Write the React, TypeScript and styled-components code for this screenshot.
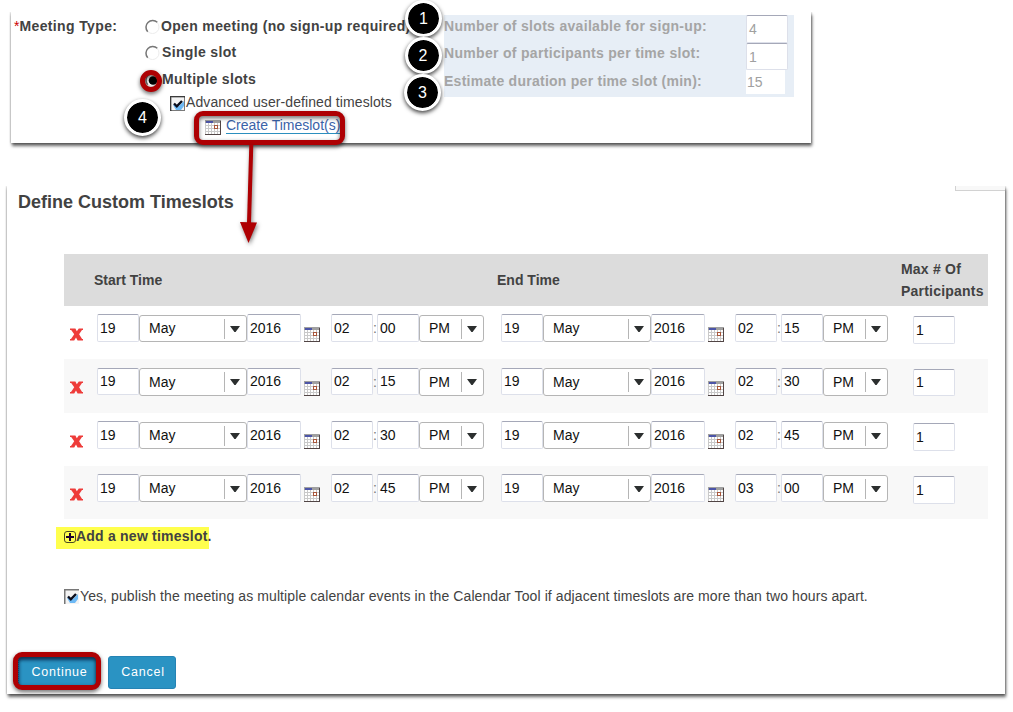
import React from 'react';
import styled, { createGlobalStyle } from 'styled-components';

const RED = '#ae0003';

const GlobalStyle = createGlobalStyle`
  * { box-sizing: border-box; }
  body {
    margin: 0;
    background: #fff;
    color: #424242;
    font: 14px/20px "Liberation Sans", Arial, sans-serif;
  }
  svg { display: block; flex: none; }
`;

const Page = styled.main`
  position: relative;
  width: 1013px;
  height: 712px;
  overflow: hidden;
  padding: 12px 0 0 7px;
`;

const Panel = styled.section`
  background: #fff;
  box-shadow: 0 0 2px rgba(0, 0, 0, 0.4), 1px 3px 3px rgba(0, 0, 0, 0.6);
  clip-path: inset(0 -8px -10px -8px);
`;

const TypePanel = styled(Panel)`
  display: flex;
  width: 800px;
  height: 131px;
  margin-left: 4px;
  padding: 1px 0 0 3px;
`;

const SlotsPanel = styled(Panel)`
  width: 998px;
  height: 508px;
  margin-top: 43px;
`;

const FieldName = styled.div`
  width: 131px;
  line-height: 26px;
  font-weight: bold;
  letter-spacing: 0.37px;
  white-space: nowrap;
`;

const Required = styled.span`
  color: #c00;
  font-weight: normal;
  letter-spacing: 0;
`;

const Options = styled.div`
  width: 299px;
`;

const Option = styled.label<{ $height: number; $sub?: boolean; $gap?: number }>`
  display: flex;
  align-items: center;
  gap: ${(p) => p.$gap ?? 2}px;
  height: ${(p) => p.$height}px;
  padding-left: ${(p) => (p.$sub ? 25 : 0)}px;
  font-weight: ${(p) => (p.$sub ? 'normal' : 'bold')};
  line-height: ${(p) => (p.$sub ? 19 : 20)}px;
  letter-spacing: ${(p) => (p.$sub ? 0.09 : 0.34)}px;
  white-space: nowrap;
`;

const OptionText = styled.span`
  padding-bottom: 2px;
`;

const CreateLine = styled.div`
  display: flex;
  align-items: center;
  gap: 5px;
  height: 22px;
  padding: 2px 0 0 60px;
  white-space: nowrap;
`;

const Link = styled.a`
  margin-bottom: 2px;
  color: #3a62a8;
  line-height: 15px;
  border-bottom: 1px solid #2b8fbf;
`;

const SlotSettings = styled.div`
  width: 350px;
  height: 82px;
  margin-top: 2px;
  background: #e7eef6;
`;

const Setting = styled.div<{ $height: number; $line: number }>`
  display: flex;
  justify-content: space-between;
  height: ${(p) => p.$height}px;
  line-height: ${(p) => p.$line}px;
  padding-right: 6px;
  color: #a5a5a5;
  font-weight: bold;
  letter-spacing: ${(p) => (p.$line === 23 && p.$height === 27 ? 0.26 : 0.31)}px;
`;

const TextBox = styled.span<{ $w?: number; $muted?: boolean }>`
  flex: none;
  width: ${(p) => p.$w ?? 42}px;
  height: 28px;
  max-height: 100%;
  padding-left: ${(p) => (p.$muted ? 2 : 2)}px;
  border: 1px solid #dde0ea;
  border-top-color: #a5a8b8;
  border-radius: 2px;
  background: #fff;
  color: ${(p) => (p.$muted ? '#a0a0a0' : '#111')};
  font-weight: normal;
  letter-spacing: 0;
  line-height: ${(p) => (p.$muted ? 26 : 26)}px;
`;

const PlainBox = styled.span`
  width: 39px;
  height: 24px;
  margin-right: 3px;
  padding-left: 1px;
  background: #fff;
  color: #a0a0a0;
  font-weight: normal;
  letter-spacing: 0;
  line-height: 25px;
`;

const Title = styled.h1`
  margin: -1px 0 0;
  padding-left: 11px;
  font-size: 18px;
  line-height: 24px;
`;

const Table = styled.div`
  width: 924px;
  margin: 40px 0 0 57px;
`;

const TableHead = styled.div`
  display: grid;
  grid-template-columns: 403px 404px 1fr;
  align-items: center;
  height: 52px;
  padding-left: 30px;
  background: #dcdcdc;
  font-weight: bold;
  line-height: 22px;
`;

const LooseText = styled.span`
  letter-spacing: 0.21px;
`;

const Select = styled.span<{ $w: number }>`
  display: flex;
  align-items: center;
  flex: none;
  width: ${(p) => p.$w}px;
  height: 27px;
  margin-top: 1px;
  padding-left: 9px;
  border: 1px solid #b5b5b5;
  border-radius: 3px;
  background: #fff;
  color: #111;
  line-height: 24px;
`;

const Row = styled.div<{ $shaded: boolean; $tall: boolean }>`
  display: flex;
  align-items: flex-start;
  height: ${(p) => (p.$tall ? 54 : 53)}px;
  padding: ${(p) => (p.$tall ? 9 : 8)}px 0 0 6px;
  background: ${(p) => (p.$shaded ? '#f8f8f8' : '#fff')};

  ${TextBox} {
    height: ${(p) => (p.$tall ? 27 : 28)}px;
    line-height: ${(p) => (p.$tall ? 24 : 26)}px;
  }

  ${Select} {
    height: ${(p) => (p.$tall ? 28 : 27)}px;
    margin-top: ${(p) => (p.$tall ? 0 : 1)}px;
  }
`;

const RemoveButton = styled.span<{ $tall: boolean }>`
  width: 27px;
  padding-top: ${(p) => (p.$tall ? 13 : 14)}px;
`;

const DateTime = styled.div`
  display: flex;
  align-items: flex-start;
  width: 404px;
`;

const SelectValue = styled.span`
  flex: 1;
  height: 25px;
`;

const SelectArrow = styled.span`
  display: flex;
  align-items: center;
  justify-content: center;
  width: 22px;
  height: 20px;
  padding-right: 2px;
  border-left: 1px solid #b5b5b5;
`;

const CalendarSlot = styled.span`
  padding: 13px 11px 0 3px;
`;

const Colon = styled.span`
  width: 4px;
  line-height: 28px;
  color: #777;
`;

const Capacity = styled.div<{ $tall: boolean }>`
  display: flex;
  padding: ${(p) => (p.$tall ? 1 : 2)}px 0 0 8px;
`;

const AddSlot = styled.div`
  display: flex;
  align-items: center;
  width: 153px;
  height: 22px;
  margin: 8px 0 0 49px;
  padding: 0 0 2px 8px;
  background: #ffff4d;
  font-weight: bold;
  line-height: 18px;
  letter-spacing: 0.22px;
  white-space: nowrap;
`;

const Publish = styled.label`
  display: flex;
  align-items: center;
  gap: 1px;
  margin: 37px 0 0 57px;
  letter-spacing: 0.095px;
  white-space: nowrap;
`;

const Actions = styled.div`
  display: flex;
  gap: 11px;
  margin: 50px 0 0 11px;
`;

const Button = styled.button<{ $w: number; $focused?: boolean }>`
  width: ${(p) => p.$w}px;
  height: 33px;
  padding: 0 0 2px ${(p) => (p.$focused ? 4 : 2)}px;
  border: 1px ${(p) => (p.$focused ? 'dotted #123f78' : 'solid #2583b4')};
  border-radius: 3px;
  background: #2a93c3;
  box-shadow: ${(p) => (p.$focused ? 'inset 0 3px 3px rgba(10, 50, 120, 0.5)' : 'none')};
  color: #fff;
  font: 12.5px "Liberation Sans", Arial, sans-serif;
  letter-spacing: 0.74px;
`;

const CornerTab = styled.div`
  width: 50px;
  height: 5px;
  margin-left: auto;
  border: solid #d2d2d2;
  border-width: 0 0 1px 1px;
  background: #f8f8f8;
`;

const Badge = styled.span<{ $x: number; $y: number }>`
  position: absolute;
  left: ${(p) => p.$x - 18.5}px;
  top: ${(p) => p.$y - 18.5}px;
  width: 37px;
  height: 37px;
  border: 3px solid #fff;
  border-radius: 50%;
  background: #000;
  background-clip: padding-box;
  box-shadow: 0 2px 4px rgba(0, 0, 0, 0.75);
  color: #fff;
  font-size: 16px;
  line-height: 31px;
  text-align: center;
`;

const Highlight = styled.span<{ $x: number; $y: number; $w: number; $h: number; $r: string }>`
  position: absolute;
  left: ${(p) => p.$x}px;
  top: ${(p) => p.$y}px;
  width: ${(p) => p.$w}px;
  height: ${(p) => p.$h}px;
  border: 5px solid ${RED};
  border-radius: ${(p) => p.$r};
  filter: drop-shadow(0 2px 2px rgba(0, 0, 0, 0.6));
`;

const Arrow = styled.svg`
  position: absolute;
  left: 236px;
  top: 145px;
  filter: drop-shadow(1px 2px 2px rgba(0, 0, 0, 0.5));
`;

const Radio = ({ checked = false }: { checked?: boolean }) => (
  <svg width="15" height="16" viewBox="0 0 15 16">
    <circle cx="7.5" cy="9" r="6.5" fill="#fff" stroke="#ececec" />
    <path d="M2.7 13.8A6.8 6.8 0 0 1 12.3 4.2" fill="none" stroke="#777" strokeWidth="1.5" />
    {checked && <circle cx="8" cy="9.5" r="4.3" fill="#000" />}
  </svg>
);

const Checkbox = ({ focused = false }: { focused?: boolean }) => (
  <svg width="15" height="15" viewBox="0 0 15 15">
    <rect width="15" height="15" fill="#f3f3f3" />
    <path d="M3 9l3 5h5l3-4V5l-5 5z" fill="#6db9f5" />
    <path d="M0 .75h15M.75 0v15" stroke="#777" strokeWidth="1.5" />
    <path d="M4 7.5l2.8 2.8L12 5" fill="none" stroke="#080c1c" strokeWidth="2.4" />
    {focused && (
      <rect x=".5" y=".5" width="14" height="14" fill="none" stroke="#000" strokeDasharray="1 1" />
    )}
  </svg>
);

const Calendar = () => (
  <svg width="16" height="15" viewBox="0 0 16 15" shapeRendering="crispEdges">
    <rect width="16" height="15" fill="#c9c9c9" />
    <path
      d="M1 3h2v2H1zM4 3h2v2H4zM7 3h2v2H7zM10 3h2v2h-2zM13 3h2v2h-2zM1 6h2v2H1zM4 6h2v2H4zM7 6h2v2H7zM13 6h2v2h-2zM1 9h2v2H1zM4 9h2v2H4zM7 9h2v2H7zM10 9h2v2h-2zM13 9h2v2h-2zM1 12h2v2H1zM4 12h2v2H4zM7 12h2v2H7zM10 12h2v2h-2zM13 12h2v2h-2z"
      fill="#fff"
    />
    <rect width="16" height="3" fill="#a0a0a0" />
    <rect x="1" y="1" width="7" height="2" fill="#4c55a8" />
    <path d="M0 14.5h16M15.5 1v14" stroke="#514545" />
    <rect x="9.5" y="5.5" width="3" height="3" fill="#fff" stroke="#a8563a" />
  </svg>
);

const Cross = () => (
  <svg width="13" height="13" viewBox="0 0 13 13">
    <path
      d="M0 .5h5.4l1.4 2.7L8.8.5H13v1.6h-1L9.1 6.3l3 4.7h.9v1.5H7.6L6 9.6l-1.8 2.9H0V11h1l3.2-4.8L1.2 2H0z"
      fill="#ee3c3a"
    />
  </svg>
);

const Plus = () => (
  <svg width="12" height="12" viewBox="0 0 12 12">
    <rect x=".5" y=".5" width="11" height="11" rx="2.5" fill="none" stroke="#4a4a20" />
    <path d="M2 6h8M6 2v8" stroke="#1c0030" strokeWidth="2" />
  </svg>
);

const Caret = () => (
  <svg width="10" height="6" viewBox="0 0 10 6">
    <path d="M0 0h10L5.6 6H4.4z" fill="#2c2f2f" />
  </svg>
);

type Time = [hour: string, minute: string];

const slots: { start: Time; end: Time }[] = [
  { start: ['02', '00'], end: ['02', '15'] },
  { start: ['02', '15'], end: ['02', '30'] },
  { start: ['02', '30'], end: ['02', '45'] },
  { start: ['02', '45'], end: ['03', '00'] },
];

const Dropdown = ({ width, value }: { width: number; value: string }) => (
  <Select $w={width}>
    <SelectValue>{value}</SelectValue>
    <SelectArrow>
      <Caret />
    </SelectArrow>
  </Select>
);

const DateTimeFields = ({ time }: { time: Time }) => (
  <DateTime>
    <TextBox>19</TextBox>
    <Dropdown width={108} value="May" />
    <TextBox $w={54}>2016</TextBox>
    <CalendarSlot>
      <Calendar />
    </CalendarSlot>
    <TextBox>{time[0]}</TextBox>
    <Colon>:</Colon>
    <TextBox>{time[1]}</TextBox>
    <Dropdown width={65} value="PM" />
  </DateTime>
);

export default function App() {
  return (
    <>
      <GlobalStyle />
      <Page>
        <TypePanel>
          <FieldName>
            <Required>*</Required>Meeting Type:
          </FieldName>
          <Options>
            <Option $height={26} $gap={1}>
              <Radio />
              Open meeting (no sign-up required)
            </Option>
            <Option $height={26}>
              <Radio />
              Single slot
            </Option>
            <Option $height={27}>
              <Radio checked />
              Multiple slots
            </Option>
            <Option $height={23} $gap={1} $sub>
              <Checkbox focused />
              <OptionText>Advanced user-defined timeslots</OptionText>
            </Option>
            <CreateLine>
              <Calendar />
              <Link>Create Timeslot(s)</Link>
            </CreateLine>
          </Options>
          <SlotSettings>
            <Setting $height={28} $line={23}>
              Number of slots available for sign-up:
              <TextBox $muted>4</TextBox>
            </Setting>
            <Setting $height={27} $line={21}>
              Number of participants per time slot:
              <TextBox $muted>1</TextBox>
            </Setting>
            <Setting $height={27} $line={23}>
              Estimate duration per time slot (min):
              <PlainBox>15</PlainBox>
            </Setting>
          </SlotSettings>
        </TypePanel>

        <SlotsPanel>
          <CornerTab />
          <Title>Define Custom Timeslots</Title>
          <Table>
            <TableHead>
              <span>Start Time</span>
              <span>End Time</span>
              <LooseText>
                Max # Of
                <br />
                Participants
              </LooseText>
            </TableHead>
            {slots.map((slot, i) => (
              <Row key={i} $shaded={i % 2 === 1} $tall={i === 1}>
                <RemoveButton $tall={i === 1}>
                  <Cross />
                </RemoveButton>
                <DateTimeFields time={slot.start} />
                <DateTimeFields time={slot.end} />
                <Capacity $tall={i === 1}>
                  <TextBox>1</TextBox>
                </Capacity>
              </Row>
            ))}
          </Table>
          <AddSlot>
            <Plus />
            <OptionText>Add a new timeslot.</OptionText>
          </AddSlot>
          <Publish>
            <Checkbox />
            Yes, publish the meeting as multiple calendar events in the Calendar Tool if adjacent
            timeslots are more than two hours apart.
          </Publish>
          <Actions>
            <Button $w={79} $focused>
              Continue
            </Button>
            <Button $w={68}>Cancel</Button>
          </Actions>
        </SlotsPanel>

        <Highlight $x={194} $y={111} $w={151} $h={34} $r="9px" />
        <Highlight $x={140} $y={70} $w={22} $h={22} $r="50%" />
        <Highlight $x={13} $y={652} $w={88} $h={38} $r="9px" />
        <Arrow width="26" height="100" viewBox="0 0 26 100">
          <path d="M15.3 0L13 78" stroke={RED} strokeWidth="4" />
          <path d="M4 77l17 .5L12.5 98z" fill={RED} />
        </Arrow>
        <Badge $x={423.5} $y={18.5}>1</Badge>
        <Badge $x={423} $y={55.5}>2</Badge>
        <Badge $x={422.5} $y={92.5}>3</Badge>
        <Badge $x={142.5} $y={117.5}>4</Badge>
      </Page>
    </>
  );
}
